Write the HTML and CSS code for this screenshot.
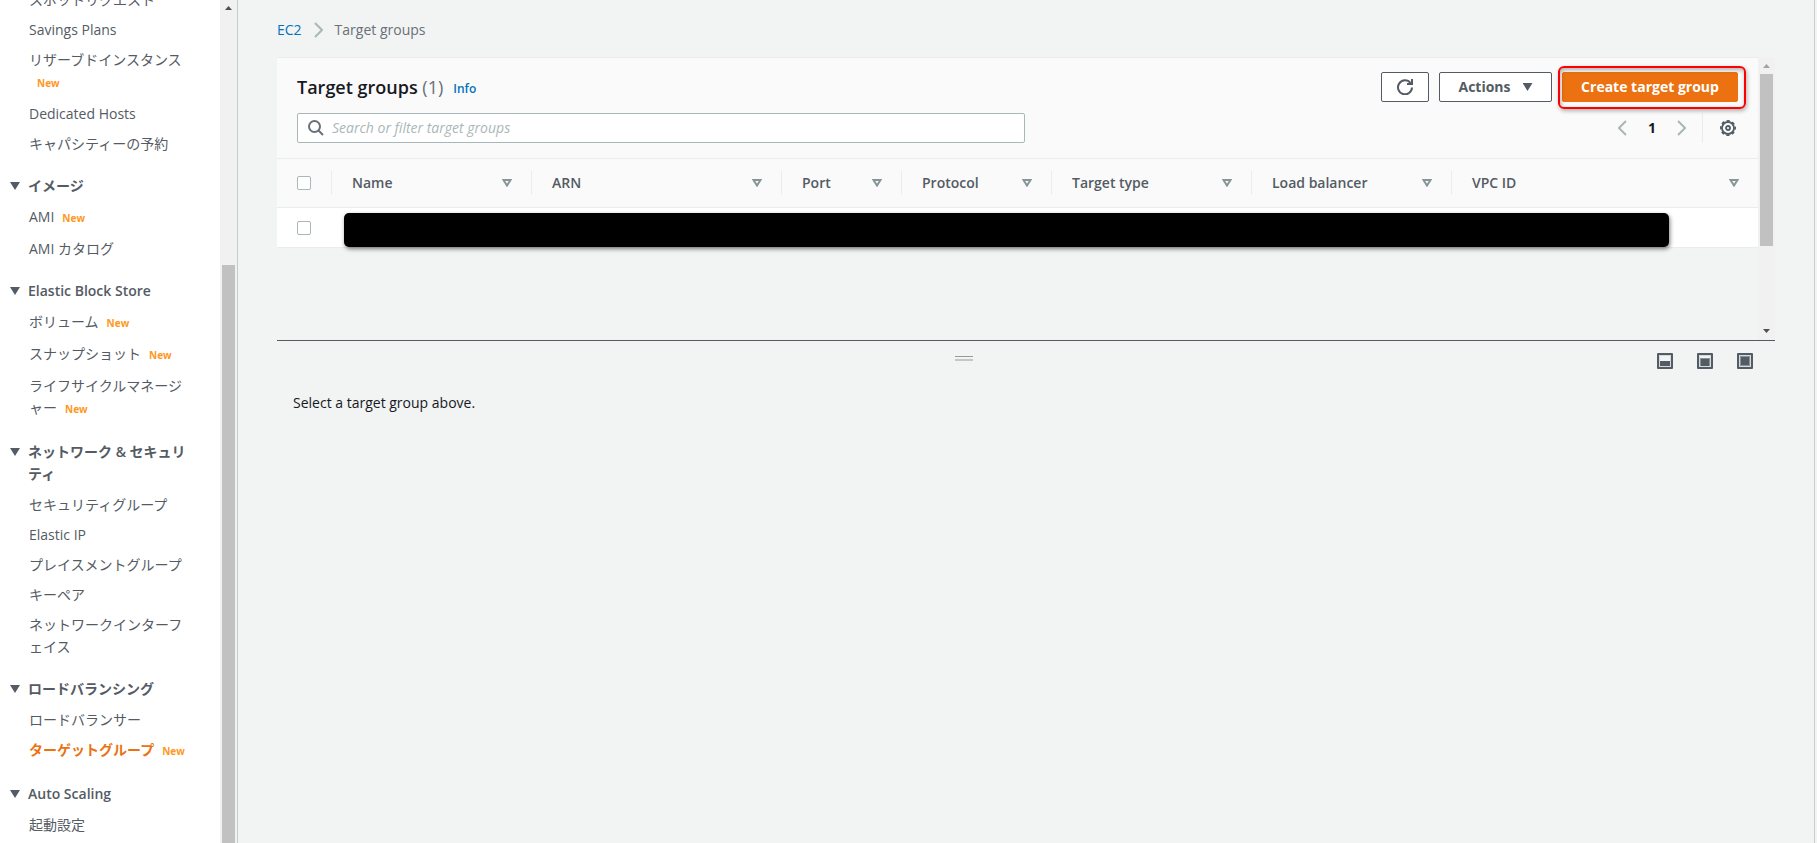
FILE: index.html
```html
<!DOCTYPE html>
<html lang="ja">
<head>
<meta charset="utf-8">
<title>Target groups | EC2</title>
<link rel="stylesheet" href="styles.css">
</head>
<body>
<div class="app">
  <aside class="sidebar">
    <nav class="nav" aria-label="EC2">
      <ul class="nav-list">
        <li><a href="#">スポットリクエスト</a></li>
        <li><a href="#">Savings Plans</a></li>
        <li class="is-new"><a href="#">リザーブドインスタンス</a> <span class="badge">New</span></li>
        <li><a href="#">Dedicated Hosts</a></li>
        <li><a href="#">キャパシティーの予約</a></li>
      </ul>
      <button class="nav-heading" type="button"><span class="caret"></span>イメージ</button>
      <ul class="nav-list">
        <li class="is-new"><a href="#">AMI</a><span class="badge">New</span></li>
        <li><a href="#">AMI カタログ</a></li>
      </ul>
      <button class="nav-heading" type="button"><span class="caret"></span>Elastic Block Store</button>
      <ul class="nav-list">
        <li class="is-new"><a href="#">ボリューム</a><span class="badge">New</span></li>
        <li class="is-new"><a href="#">スナップショット</a><span class="badge">New</span></li>
        <li class="is-new"><a href="#">ライフサイクルマネージャー</a><span class="badge">New</span></li>
      </ul>
      <button class="nav-heading" type="button"><span class="caret"></span>ネットワーク &amp; セキュリティ</button>
      <ul class="nav-list">
        <li><a href="#">セキュリティグループ</a></li>
        <li><a href="#">Elastic IP</a></li>
        <li><a href="#">プレイスメントグループ</a></li>
        <li><a href="#">キーペア</a></li>
        <li><a href="#">ネットワークインターフェイス</a></li>
      </ul>
      <button class="nav-heading" type="button"><span class="caret"></span>ロードバランシング</button>
      <ul class="nav-list">
        <li><a href="#">ロードバランサー</a></li>
        <li class="is-new"><a class="current" href="#" aria-current="page">ターゲットグループ</a><span class="badge">New</span></li>
      </ul>
      <button class="nav-heading" type="button"><span class="caret"></span>Auto Scaling</button>
      <ul class="nav-list">
        <li><a href="#">起動設定</a></li>
      </ul>
    </nav>
    <div class="scrollbar scrollbar-nav">
      <svg class="scroll-arrow" width="7" height="4" viewBox="0 0 7 4"><path d="M0 4L3.500 0L7 4z" fill="#505050"/></svg>
      <span class="scroll-thumb"></span>
    </div>
  </aside>

  <main class="main">
    <nav class="breadcrumb" aria-label="Breadcrumb">
      <a href="#">EC2</a>
      <svg width="9" height="16" viewBox="0 0 9 16" fill="none" stroke="#aab7b8" stroke-width="2"><path d="M1 1l7 7-7 7"/></svg>
      <span>Target groups</span>
    </nav>

    <div class="upper">
      <section class="card">
        <div class="card-head">
          <div class="title-row">
            <h1 class="title">Target groups <span class="count">(1)</span></h1>
            <a class="info" href="#">Info</a>
            <div class="actions">
              <button class="btn btn-icon" type="button" aria-label="Refresh">
                <svg width="16" height="16" viewBox="0 0 16 16" fill="none" stroke="#545b64" stroke-width="2"><path d="M15 8.500A7 7 0 1 1 13.500 4"/><path d="M15 0v5h-5" /></svg>
              </button>
              <button class="btn btn-menu" type="button">Actions <span class="caret"></span></button>
              <span class="highlight"><button class="btn btn-primary" type="button">Create target group</button></span>
            </div>
          </div>
          <div class="filter-row">
            <label class="search">
              <svg width="16" height="16" viewBox="0 0 16 16" fill="none" stroke="#687078" stroke-width="2"><circle cx="6.500" cy="6.500" r="5.500"/><path d="M10.500 10.500L15 15"/></svg>
              <input type="text" placeholder="Search or filter target groups" aria-label="Search or filter target groups">
            </label>
            <div class="pager">
              <button type="button" aria-label="Previous page"><svg width="9" height="16" viewBox="0 0 9 16" fill="none" stroke="#aab7b8" stroke-width="2"><path d="M8 1L1 8l7 7"/></svg></button>
              <button class="page-number" type="button">1</button>
              <button type="button" aria-label="Next page"><svg width="9" height="16" viewBox="0 0 9 16" fill="none" stroke="#aab7b8" stroke-width="2"><path d="M1 1l7 7-7 7"/></svg></button>
            </div>
            <button class="settings" type="button" aria-label="Preferences">
              <svg width="16" height="16" viewBox="0 0 16 16" fill="none" stroke="#545b64"><circle cx="8" cy="8" r="6" stroke-width="1.800"/><circle cx="8" cy="8" r="7.200" stroke-width="1.600" stroke-dasharray="3.200 2.455" stroke-dashoffset="1.600"/><circle cx="8" cy="8" r="2" stroke-width="1.800"/></svg>
            </button>
          </div>
        </div>
        <table class="grid">
          <colgroup>
            <col class="w-check"><col class="w-200"><col class="w-250"><col class="w-120"><col class="w-150"><col class="w-200"><col class="w-200"><col>
          </colgroup>
          <thead>
            <tr>
              <th class="check"><input type="checkbox" aria-label="Select all"></th>
              <th><button class="sort" type="button">Name <svg width="10" height="8" viewBox="0 0 10 8"><path d="M1.500 1h7L5 6.500z" fill="none" stroke="#879596" stroke-width="2"/></svg></button></th>
              <th><button class="sort" type="button">ARN <svg width="10" height="8" viewBox="0 0 10 8"><path d="M1.500 1h7L5 6.500z" fill="none" stroke="#879596" stroke-width="2"/></svg></button></th>
              <th><button class="sort" type="button">Port <svg width="10" height="8" viewBox="0 0 10 8"><path d="M1.500 1h7L5 6.500z" fill="none" stroke="#879596" stroke-width="2"/></svg></button></th>
              <th><button class="sort" type="button">Protocol <svg width="10" height="8" viewBox="0 0 10 8"><path d="M1.500 1h7L5 6.500z" fill="none" stroke="#879596" stroke-width="2"/></svg></button></th>
              <th><button class="sort" type="button">Target type <svg width="10" height="8" viewBox="0 0 10 8"><path d="M1.500 1h7L5 6.500z" fill="none" stroke="#879596" stroke-width="2"/></svg></button></th>
              <th><button class="sort" type="button">Load balancer <svg width="10" height="8" viewBox="0 0 10 8"><path d="M1.500 1h7L5 6.500z" fill="none" stroke="#879596" stroke-width="2"/></svg></button></th>
              <th><button class="sort" type="button">VPC ID <svg width="10" height="8" viewBox="0 0 10 8"><path d="M1.500 1h7L5 6.500z" fill="none" stroke="#879596" stroke-width="2"/></svg></button></th>
            </tr>
          </thead>
          <tbody>
            <tr>
              <td class="check"><input type="checkbox" aria-label="Select target group"></td>
              <td class="masked" colspan="7"><div class="mask"></div></td>
            </tr>
          </tbody>
        </table>
      </section>
      <div class="scrollbar scrollbar-list">
        <svg class="scroll-arrow" width="7" height="4" viewBox="0 0 7 4"><path d="M0 4L3.500 0L7 4z" fill="#a3a3a3"/></svg>
        <span class="scroll-thumb"></span>
        <svg class="scroll-arrow" width="7" height="4" viewBox="0 0 7 4"><path d="M0 0h7L3.500 4z" fill="#505050"/></svg>
      </div>
    </div>

    <section class="lower">
      <div class="split-bar">
        <span class="grip"></span>
        <div class="layouts">
          <button type="button" aria-label="Small panel"><svg width="16" height="16" viewBox="0 0 16 16"><rect width="16" height="16" rx="1" fill="#545b64"/><path d="M2 2h12v12H2z" fill="#d5dbdb"/><path d="M3 3h10v5H3z" fill="#f2f3f3"/><path d="M3 8h10v5H3z" fill="#545b64"/></svg></button>
          <button type="button" aria-label="Medium panel"><svg width="16" height="16" viewBox="0 0 16 16"><rect width="16" height="16" rx="1" fill="#545b64"/><path d="M2 2h12v12H2z" fill="#d5dbdb"/><path d="M3 3h10v2H3z" fill="#f2f3f3"/><path d="M3 5h10v8H3z" fill="#879596"/><path d="M4 6h8v7H4z" fill="#545b64"/></svg></button>
          <button type="button" aria-label="Full panel"><svg width="16" height="16" viewBox="0 0 16 16"><rect width="16" height="16" rx="1" fill="#545b64"/><path d="M2 2h12v12H2z" fill="#d5dbdb"/><path d="M3 3h10v10H3z" fill="#879596"/><path d="M4 4h8v8H4z" fill="#545b64"/></svg></button>
        </div>
      </div>
      <p class="empty">Select a target group above.</p>
    </section>
  </main>
</div>
</body>
</html>
```

FILE: styles.css
```css
* {
  box-sizing: border-box;
}

body {
  margin: 0;
  background: #f2f3f3;
  color: #16191f;
  font-family: "Open Sans", "Noto Sans CJK JP", sans-serif;
  font-size: 14px;
  line-height: 22px;
}

button,
input {
  font: inherit;
  color: inherit;
}

button {
  padding: 0;
  border: 0;
  background: none;
}

svg {
  display: block;
  flex: none;
}

a {
  color: #0073bb;
  text-decoration: none;
}

.app {
  display: flex;
  height: 100vh;
  overflow: hidden;
}

/* Side navigation */
.sidebar {
  display: flex;
  flex: none;
  width: 238px;
  overflow: hidden;
  background: #fff;
  border-right: 1px solid #c8cdcd;
}

.nav {
  flex: 1;
  margin-top: -15px;
  padding: 0 34px 0 10px;
  color: #545b64;
}

.nav-list {
  margin: 0;
  padding: 0 0 0 19px;
  list-style: none;
}

.nav-list li {
  padding: 4px 0;
  word-break: break-all;
}

.nav-list .is-new {
  padding-bottom: 6px;
}

.nav-list a {
  color: #545b64;
}

.nav-list .current {
  color: #ec7211;
  font-weight: 700;
}

.badge {
  margin-left: 8px;
  color: #ff9822;
  font-size: 10px;
  font-weight: 700;
  line-height: 16px;
}

.nav-heading {
  display: flex;
  width: 100%;
  padding: 16px 0 5px;
  color: #545b64;
  font-weight: 600;
  text-align: left;
  word-break: break-all;
}

.nav-heading .caret {
  margin: 7px 8px 0 0;
}

.caret {
  flex: none;
  width: 10px;
  height: 8px;
  background: #545b64;
  clip-path: polygon(0 0, 100% 0, 50% 100%);
}

/* Scroll bars */
.scrollbar {
  display: flex;
  flex: none;
  flex-direction: column;
  align-items: center;
  width: 17px;
  padding: 6px 0;
  background: #f1f1f1;
}

.scroll-thumb {
  width: 13px;
  background: #c1c1c1;
}

.scrollbar-nav {
  padding-bottom: 0;
}

.scrollbar-nav .scroll-thumb {
  flex: 1;
  margin-top: 255px;
}

.scrollbar-list {
  padding: 7px 0;
}

.scrollbar-list .scroll-thumb {
  height: 172px;
  margin: 6px 0 auto;
}

/* Main area */
.main {
  display: flex;
  flex: 1;
  flex-direction: column;
  min-width: 0;
  margin-right: 2px;
  padding: 0 39px;
  border-right: 1px solid #c8cdcd;
}

.breadcrumb {
  display: flex;
  align-items: center;
  gap: 12px;
  padding: 19px 0 16px;
  color: #687078;
}

.upper {
  display: flex;
  height: 284px;
  border-bottom: 1px solid #545b64;
}

.card {
  flex: 1;
  min-width: 0;
}

.card-head {
  padding: 14px 20px 15px;
  background: #fafafa;
  border-top: 1px solid #eaeded;
  border-bottom: 1px solid #eaeded;
}

.title-row,
.filter-row,
.actions,
.pager {
  display: flex;
  align-items: center;
}

.title {
  margin: 0;
  font-size: 18px;
  font-weight: 600;
}

.count {
  color: #687078;
  font-weight: 400;
}

.info {
  margin: 4px 0 0 10px;
  font-size: 12px;
  font-weight: 600;
}

.actions {
  gap: 10px;
  margin-left: auto;
}

.btn {
  display: flex;
  align-items: center;
  justify-content: center;
  height: 30px;
  background: #fff;
  border: 1px solid #545b64;
  border-radius: 2px;
  color: #545b64;
  font-weight: 700;
}

.btn-icon {
  width: 48px;
}

.btn-menu {
  gap: 12px;
  width: 113px;
}

.highlight {
  position: relative;
}

.highlight::after {
  content: "";
  position: absolute;
  inset: -6px -8px -7px -4px;
  border: 2px solid #ff0000;
  border-radius: 6px;
  box-shadow: 1px 2px 4px rgba(0, 0, 0, 0.3), inset 1px 2px 4px rgba(0, 0, 0, 0.3);
  pointer-events: none;
}

.btn-primary {
  width: 176px;
  background: #ec7211;
  border-color: #ec7211;
  color: #fff;
}

.filter-row {
  margin-top: 11px;
}

.search {
  display: flex;
  flex: 0 1 728px;
  align-items: center;
  gap: 8px;
  height: 30px;
  padding: 0 10px;
  background: #fff;
  border: 1px solid #aab7b8;
  border-radius: 2px;
}

.search input {
  flex: 1;
  min-width: 0;
  padding: 0;
  border: 0;
  outline: 0;
  background: none;
}

.search input::placeholder {
  color: #aab7b8;
  font-style: italic;
  opacity: 1;
}

.pager {
  gap: 20px;
  margin-left: auto;
  padding-right: 16px;
}

.page-number {
  width: 10px;
  font-weight: 700;
}

.settings {
  height: 30px;
  padding: 0 2px 0 17px;
  border-left: 1px solid #eaeded;
}

/* Target group table */
.grid {
  width: 100%;
  border-collapse: separate;
  border-spacing: 0;
  table-layout: fixed;
}

.w-check { width: 54px; }
.w-120 { width: 120px; }
.w-150 { width: 150px; }
.w-200 { width: 200px; }
.w-250 { width: 250px; }

.grid th {
  padding: 12px 0;
  background: #fafafa;
  border-bottom: 1px solid #eaeded;
}

.sort {
  display: flex;
  align-items: center;
  justify-content: space-between;
  width: 100%;
  height: 24px;
  padding: 0 19px 0 20px;
  border-left: 1px solid #eaeded;
  color: #545b64;
  font-weight: 600;
}

.grid td {
  height: 40px;
  padding: 0;
  background: #fff;
  border-bottom: 1px solid #eaeded;
}

.grid .check {
  padding-left: 20px;
  text-align: left;
}

.check input {
  display: block;
  width: 14px;
  height: 14px;
  margin: 0;
  appearance: none;
  background: #fff;
  border: 1px solid #aab7b8;
  border-radius: 2px;
}

.grid .masked {
  padding: 5px 89px 0 13px;
}

.mask {
  height: 34px;
  background: #000;
  border-radius: 5px;
  box-shadow: 1px 2px 4px rgba(0, 0, 0, 0.5);
}

/* Detail panel */
.split-bar {
  display: grid;
  grid-template-columns: 1fr auto 1fr;
  align-items: start;
  padding: 12px 22px 0 0;
}

.grip {
  grid-column: 2;
  width: 18px;
  height: 5px;
  margin: 3px 102px 0 0;
  border-top: 1px solid #959b9b;
  border-bottom: 2px solid #c3c8c6;
}

.layouts {
  display: flex;
  justify-content: flex-end;
  gap: 24px;
}

.empty {
  margin: 23px 16px;
}
```
